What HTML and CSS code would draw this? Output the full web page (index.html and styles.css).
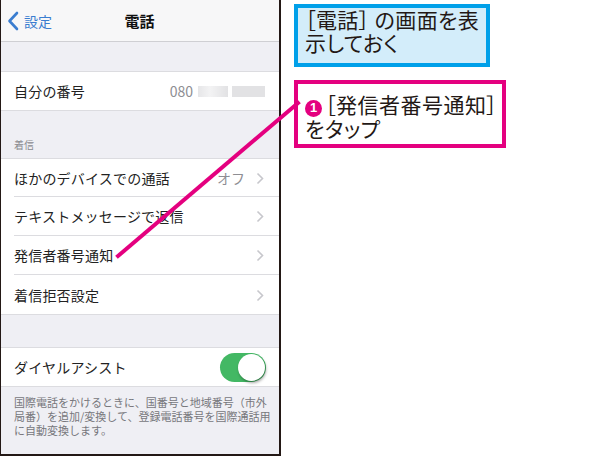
FILE: index.html
```html
<!DOCTYPE html>
<html lang="ja">
<head>
<meta charset="utf-8">
<link rel="stylesheet" href="styles.css">
</head>
<body>
<div class="page">
  <div class="phone">
    <div class="nav">
      <div class="back">
        <svg class="back-chev" width="12" height="20" viewBox="0 0 12 20"><path d="M10 2 L2.5 10 L10 18" fill="none" stroke="#3a7dd0" stroke-width="2.6" stroke-linecap="round" stroke-linejoin="round"/></svg>
        <span>設定</span>
      </div>
      <div class="title">電話</div>
    </div>
    <div class="gap g1"></div>
    <div class="group">
      <div class="row">
        <span class="label">自分の番号</span>
        <span class="value">080<span class="blur b1"></span><span class="blur b2"></span></span>
      </div>
    </div>
    <div class="section-head">着信</div>
    <div class="group">
      <div class="row sep">
        <span class="label">ほかのデバイスでの通話</span>
        <span class="value">オフ<svg class="chev" width="8" height="13" viewBox="0 0 8 13"><path d="M1.5 1.5 L6.5 6.5 L1.5 11.5" fill="none" stroke="#c7c7cc" stroke-width="1.6"/></svg></span>
      </div>
      <div class="row sep">
        <span class="label">テキストメッセージで返信</span>
        <span class="value"><svg class="chev" width="8" height="13" viewBox="0 0 8 13"><path d="M1.5 1.5 L6.5 6.5 L1.5 11.5" fill="none" stroke="#c7c7cc" stroke-width="1.6"/></svg></span>
      </div>
      <div class="row sep">
        <span class="label">発信者番号通知</span>
        <span class="value"><svg class="chev" width="8" height="13" viewBox="0 0 8 13"><path d="M1.5 1.5 L6.5 6.5 L1.5 11.5" fill="none" stroke="#c7c7cc" stroke-width="1.6"/></svg></span>
      </div>
      <div class="row">
        <span class="label">着信拒否設定</span>
        <span class="value"><svg class="chev" width="8" height="13" viewBox="0 0 8 13"><path d="M1.5 1.5 L6.5 6.5 L1.5 11.5" fill="none" stroke="#c7c7cc" stroke-width="1.6"/></svg></span>
      </div>
    </div>
    <div class="gap g2"></div>
    <div class="group">
      <div class="row">
        <span class="label">ダイヤルアシスト</span>
        <span class="toggle"><span class="knob"></span></span>
      </div>
    </div>
    <div class="footer">国際電話をかけるときに、国番号と地域番号（市外局番）を追加/変換して、登録電話番号を国際通話用に自動変換します。</div>
  </div>
  <div class="notes">
    <div class="note blue">［電話］<span class="sp"></span>の画面を表<br>示しておく</div>
    <div class="note pink"><span class="num">1</span>［発信者番号通知］<br>をタップ</div>
  </div>
  <svg class="leader" width="600" height="456" viewBox="0 0 600 456"><line x1="118" y1="256" x2="298" y2="103" stroke="#e4007f" stroke-width="4" stroke-linecap="square"/></svg>
</div>
</body>
</html>
```
FILE: styles.css
```css
* { box-sizing: border-box; margin: 0; padding: 0; }
html, body { width: 600px; height: 456px; overflow: hidden; background: #fff; }
body { font-family: "Noto Sans CJK JP", "Noto Sans", sans-serif; color: #222; }
.page { position: relative; display: flex; width: 600px; height: 456px; }
.phone {
  width: 281px; height: 456px; flex: none;
  background: #efeff4;
  border-left: 1px solid #231815;
  border-right: 2px solid #231815;
  border-bottom: 2px solid #231815;
  display: flex; flex-direction: column;
  overflow: hidden;
}
.nav {
  height: 42px; flex: none;
  background: #f7f7f8;
  border-bottom: 1px solid #cfcfd3;
  display: flex; align-items: center; justify-content: center;
  position: relative;
}
.back {
  position: absolute; left: 6px; top: 0; height: 41px;
  display: flex; align-items: center; gap: 5px;
  color: #3a7dd0; font-size: 14px;
}
.title { font-size: 15px; font-weight: 700; color: #111; margin-left: -1px; }
.gap { flex: none; }
.g1 { height: 29px; }
.g2 { height: 32px; }
.group {
  background: #fff;
  border-top: 1px solid #dcdce0;
  border-bottom: 1px solid #dcdce0;
  flex: none;
}
.row {
  height: 38px;
  margin-left: 13px;
  padding-right: 15px;
  display: flex; align-items: center; justify-content: space-between;
  font-size: 14px;
}
.group .row + .row { height: 39px; }
.row.sep { border-bottom: 1px solid #dcdce0; }
.label { color: #222; letter-spacing: 0.2px; }
.value { color: #8e8e93; display: flex; align-items: center; font-size: 14px; }
.chev { margin-left: 11px; margin-top: 1px; }
.blur { display: inline-block; height: 11px; background: #e2e2e4; filter: blur(0.6px); }
.b1 { width: 30px; margin-left: 5px; background: linear-gradient(90deg, #e6e6e8, #f3f3f4 40%, #e2e2e4); }
.b2 { width: 33px; margin-left: 4px; margin-right: -1px; }
.section-head {
  height: 47px; flex: none;
  padding-left: 13px; padding-top: 26px;
  font-size: 10px; color: #8a8a8f;
}
.toggle {
  width: 46px; height: 29px; border-radius: 15px;
  background: #43b864;
  position: relative; margin-right: -2px;
}
.knob {
  position: absolute; right: 1px; top: 1px;
  width: 27px; height: 27px; border-radius: 50%;
  background: #fff;
  box-shadow: 1px 2px 3px rgba(0,0,0,0.35);
}
.footer {
  padding: 8px 8px 0 13px;
  font-size: 11px; line-height: 14px;
  color: #77777c;
}
.notes {
  display: flex; flex-direction: column; align-items: flex-start;
  padding-top: 4px; padding-left: 13px; gap: 13px;
}
.note { color: #231815; white-space: nowrap; font-feature-settings: "palt"; }
.sp { display: inline-block; width: 5px; }
.blue {
  width: 196px; height: 63px;
  background: #d3edfa;
  border: 4px solid #00a0e9;
  padding: 0 0 0 7px;
  font-size: 21px;
  line-height: 23px;
  letter-spacing: 0.4px;
}
.pink {
  width: 212px; height: 68px;
  background: #fff;
  border: 4px solid #e4007f;
  padding: 9px 0 0 7px;
  font-size: 21px;
  line-height: 22px;
  letter-spacing: 0.5px;
}
.num {
  display: inline-flex; align-items: center; justify-content: center;
  width: 17px; height: 17px; border-radius: 50%;
  background: #e4007f; color: #fff;
  font-family: "Liberation Sans", sans-serif; font-weight: 700; font-size: 13px;
  vertical-align: 1px; margin-right: 3px; letter-spacing: 0;
}
.leader { position: absolute; left: 0; top: 0; pointer-events: none; }
```
